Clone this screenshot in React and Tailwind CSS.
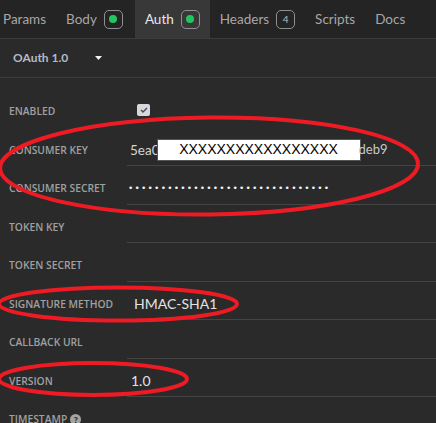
import React from "react";

const tabs = [
  { name: "Params" },
  { name: "Body", dot: true },
  { name: "Auth", dot: true, active: true },
  { name: "Headers", count: 4 },
  { name: "Scripts" },
  { name: "Docs" },
];

function Badge({ dot, count }) {
  return (
    <span className="ml-[7px] inline-flex h-[19px] w-[19px] items-center justify-center rounded-[5px] border-[1.5px] border-[#8f8f8f]">
      {dot ? (
        <span className="h-[8px] w-[8px] rounded-full bg-[#22c55e]" />
      ) : (
        <span className="text-[10px] leading-none text-[#bdbdbd]">{count}</span>
      )}
    </span>
  );
}

function Row({ label, children, line = true, help }) {
  return (
    <div className="flex h-[38.5px]">
      <div className="flex w-[127px] shrink-0 items-center pl-[9px] pt-[7px] font-['Open_Sans','Liberation_Sans',sans-serif] text-[10.3px] font-semibold uppercase text-[#a0a0a0]">
        {label}
        {help && (
          <span className="ml-[3px] inline-flex h-[11px] w-[11px] items-center justify-center rounded-full bg-[#a3a3a3] text-[8px] font-bold text-[#2a2a2a]">
            ?
          </span>
        )}
      </div>
      <div
        className={
          "flex flex-1 items-center pt-[7px] " +
          (line ? "border-b border-[#444444]" : "")
        }
      >
        {children}
      </div>
    </div>
  );
}

export default function App() {
  return (
    <div className="relative h-[423px] w-[436px] overflow-hidden bg-[#2a2a2a] font-['Lato','Liberation_Sans',sans-serif]">
      <div className="flex h-[39px] border-b border-[#3c3c3c] bg-[#242424]">
        {tabs.map((t) => (
          <div
            key={t.name}
            className={
              "flex items-center text-[13.5px] " +
              (t.name === "Params" ? "pl-[3px] pr-[10px] " : t.name === "Body" ? "pl-[10px] pr-[12px] " : "px-[10px] ") +
              (t.active ? "bg-[#383838] text-[#e6e9ee]" : "text-[#a7a7a7]")
            }
          >
            {t.name}
            {(t.dot || t.count) && <Badge dot={t.dot} count={t.count} />}
          </div>
        ))}
      </div>

      <div className="flex h-[39px] items-center border-b border-[#3c3c3c] pl-[13px]">
        <span className="text-[12px] font-bold text-[#b3bbc6]">OAuth 1.0</span>
        <svg width="7" height="4" viewBox="0 0 7 4" className="ml-[27px]">
          <path d="M0 0h7L3.5 4z" fill="#f2f2f2" />
        </svg>
      </div>

      <div className="pt-[11px]">
        <Row label="Enabled" line={false}>
          <span className="ml-[10px] mb-[4px] flex h-[12px] w-[13px] items-center justify-center rounded-[2px] bg-[#d6d8dc]">
            <svg width="8" height="6" viewBox="0 0 8 6">
              <path d="M1 3l2 2 4-4" stroke="#454a55" strokeWidth="1.4" fill="none" />
            </svg>
          </span>
        </Row>
        <Row label="Consumer Key">
          <div className="flex items-center pl-[3px] text-[13.5px] text-[#d4d4d4]">
            <span>5ea0</span>
            <span className="-ml-[3px] flex h-[22px] w-[204px] items-center justify-center border border-[#555] bg-white font-['Liberation_Sans',sans-serif] text-[14px] text-black">
              XXXXXXXXXXXXXXXXX
            </span>
            <span className="-ml-[2px] text-[13px] text-[#c8c8c8]">deb9</span>
          </div>
        </Row>
        <Row label="Consumer Secret">
          <span className="pl-[2px] font-['Liberation_Sans',sans-serif] text-[9.5px] tracking-[3.2px] text-[#f4f4f4]">
            {"•".repeat(31)}
          </span>
        </Row>
        <Row label="Token Key" />
        <Row label="Token Secret" />
        <Row label="Signature Method">
          <span className="pl-[7px] text-[14px] text-[#e2e2e2]">HMAC-SHA1</span>
        </Row>
        <Row label="Callback URL" />
        <Row label="Version">
          <span className="pl-[4px] text-[14px] text-[#e2e2e2]">1.0</span>
        </Row>
        <Row label="Timestamp" help />
      </div>

      <svg
        className="pointer-events-none absolute inset-0"
        width="436"
        height="423"
        viewBox="0 0 436 423"
      >
        <g fill="none" stroke="#ee1b24" strokeWidth="4">
          <ellipse cx="209" cy="166" rx="209" ry="48.5" transform="rotate(-0.6 209 166)" />
          <ellipse cx="118" cy="304" rx="119" ry="16.5" />
          <ellipse cx="93" cy="379" rx="94" ry="16" />
        </g>
      </svg>
    </div>
  );
}
